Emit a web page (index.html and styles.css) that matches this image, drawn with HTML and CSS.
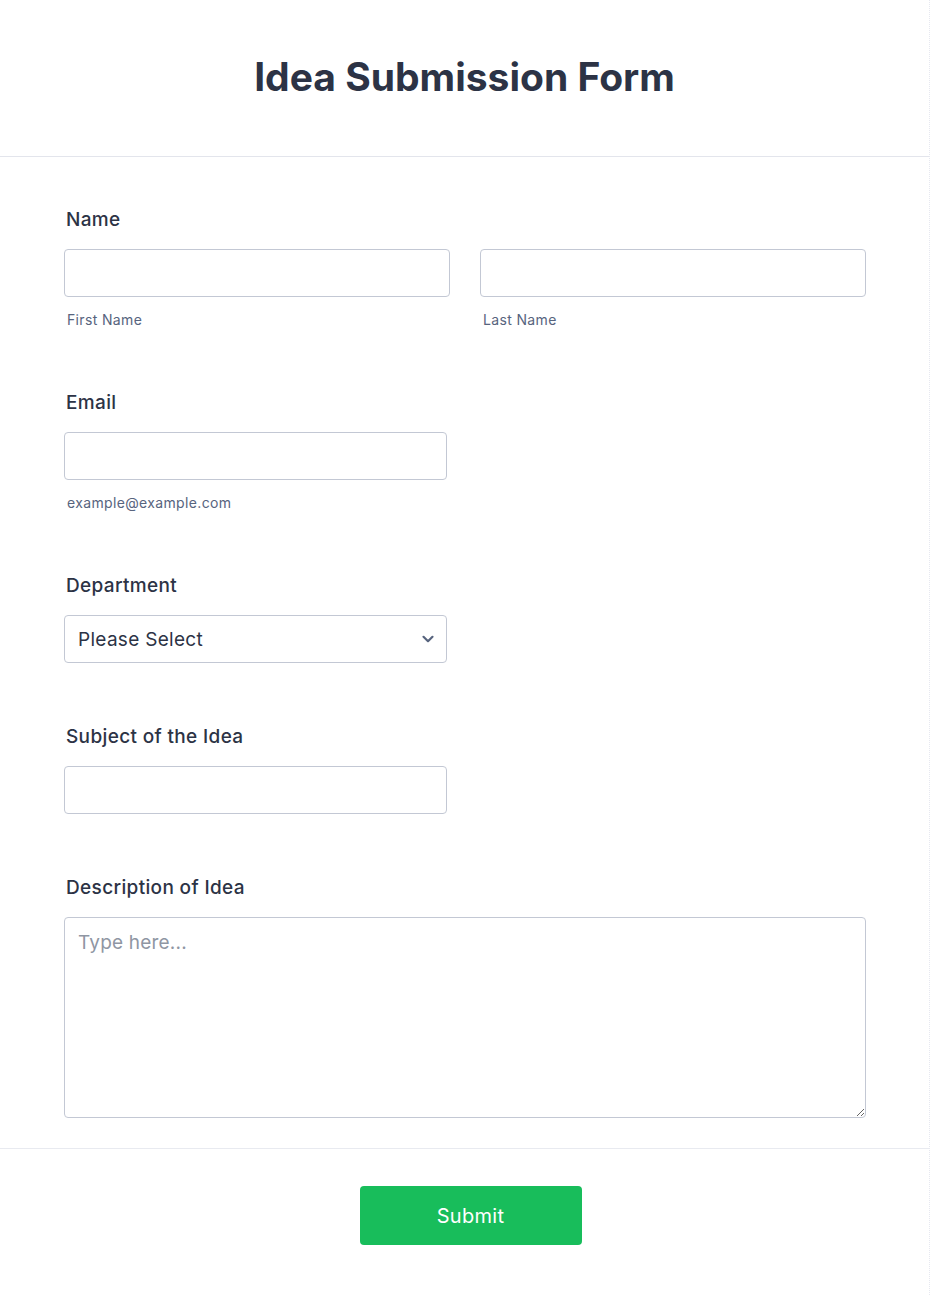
FILE: index.html
```html
<!DOCTYPE html>
<html lang="en">
<head>
<meta charset="utf-8">
<title>Idea Submission Form</title>
<link rel="stylesheet" href="styles.css">
</head>
<body>
<div class="form-card">
  <header class="form-header">
    <h1 class="form-title">Idea Submission Form</h1>
  </header>
  <form class="form-body">
    <div class="field">
      <label class="field-label">Name</label>
      <div class="two-col">
        <div class="sub-field">
          <input class="text-input" type="text">
          <span class="sub-label">First Name</span>
        </div>
        <div class="sub-field">
          <input class="text-input" type="text">
          <span class="sub-label">Last Name</span>
        </div>
      </div>
    </div>
    <div class="field">
      <label class="field-label">Email</label>
      <div class="half">
        <input class="text-input" type="email">
        <span class="sub-label">example@example.com</span>
      </div>
    </div>
    <div class="field field-nosub">
      <label class="field-label">Department</label>
      <div class="half select-wrap">
        <div class="select-box">
          <span class="select-text">Please Select</span>
          <svg class="chevron" width="14" height="10" viewBox="0 0 14 10"><path d="M2.5 2.8 L7 7.2 L11.5 2.8" fill="none" stroke="#57647e" stroke-width="2.2" stroke-linecap="round" stroke-linejoin="round"/></svg>
        </div>
      </div>
    </div>
    <div class="field field-nosub">
      <label class="field-label">Subject of the Idea</label>
      <div class="half">
        <input class="text-input" type="text">
      </div>
    </div>
    <div class="field field-last">
      <label class="field-label">Description of Idea</label>
      <textarea class="text-area" placeholder="Type here..."></textarea>
    </div>
  </form>
  <footer class="form-footer">
    <button class="submit-btn" type="button">Submit</button>
  </footer>
</div>
</body>
</html>
```
FILE: styles.css
```css
* { box-sizing: border-box; }
html, body { margin: 0; padding: 0; background: #ffffff; }
body {
  font-family: Inter, "Noto Sans", "Liberation Sans", sans-serif;
  color: #2c3345;
}
.form-card {
  width: 930px;
  min-height: 1295px;
  border-right: 1px dotted #e6e8f0;
}
.form-header {
  padding: 53px 0 55px;
  border-bottom: 1px solid #e3e5ec;
  text-align: center;
}
.form-title {
  margin: 0;
  font-size: 39px;
  line-height: 48px;
  font-weight: 700;
  color: #2c3345;
}
.form-body {
  padding: 50px 64px 30px;
  border-bottom: 1px solid #e8eaf0;
}
.field { margin-bottom: 60px; }
.field-nosub { margin-bottom: 61px; }
.field-last { margin-bottom: 0; }
.field-label {
  display: block;
  font-size: 19px;
  line-height: 24px;
  font-weight: 500;
  letter-spacing: 0.35px;
  color: #2c3345;
  padding: 1px 0 0 2px;
  margin-bottom: 17px;
}
.two-col {
  display: grid;
  grid-template-columns: 386px 386px;
  column-gap: 30px;
}
.sub-field, .half { display: flex; flex-direction: column; }
.half { width: 383px; }
.text-input {
  height: 48px;
  width: 100%;
  border: 1px solid #c3c8d4;
  border-radius: 4px;
  background: #fff;
  font: inherit;
  outline: none;
}
.sub-label {
  margin-top: 13px;
  font-size: 14px;
  line-height: 20px;
  letter-spacing: 0.35px;
  color: #57647e;
  padding-left: 3px;
}
.select-box {
  height: 48px;
  border: 1px solid #c3c8d4;
  border-radius: 4px;
  display: flex;
  align-items: center;
  justify-content: space-between;
  padding: 0 11px 0 13px;
}
.select-text {
  font-size: 19px;
  letter-spacing: 0.3px;
  color: #2c3345;
}
.chevron { display: block; }
.text-area {
  display: block;
  width: 802px;
  height: 201px;
  border: 1px solid #c3c8d4;
  border-radius: 4px;
  padding: 13px 13px;
  font-family: inherit;
  font-size: 19px;
  line-height: 24px;
  letter-spacing: 0.2px;
  color: #2c3345;
  resize: vertical;
  outline: none;
}
.text-area::placeholder { color: #8f96a3; }
.form-footer {
  padding: 37px 0 0 12px;
  display: flex;
  justify-content: center;
}
.submit-btn {
  width: 222px;
  height: 59px;
  border: none;
  border-radius: 4px;
  background: #18bd5b;
  color: #fff;
  font-family: inherit;
  font-size: 20px;
  font-weight: 400;
  letter-spacing: 0.3px;
}
```
